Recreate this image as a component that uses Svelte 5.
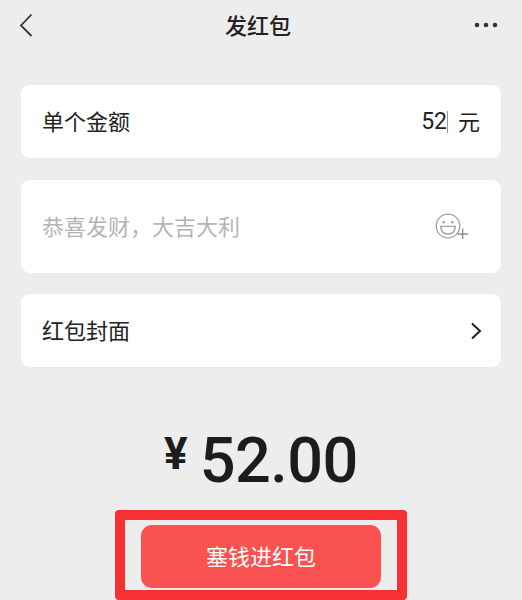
<script>
  const cardRadius = 9;
</script>

<div class="page" style="--r:{cardRadius}px">
  <header class="nav">
    <svg class="back" width="16" height="24" viewBox="0 0 16 24"><path d="M13.5 1.5 L3 12.5 L13.5 23" fill="none" stroke="#333" stroke-width="1.8"/></svg>
    <h1>发红包</h1>
    <svg class="more" width="24" height="6" viewBox="0 0 24 6"><circle cx="3" cy="3" r="2.3"/><circle cx="12" cy="3" r="2.3"/><circle cx="21" cy="3" r="2.3"/></svg>
  </header>

  <section class="cards">
    <div class="card row amount">
      <span class="label">单个金额</span>
      <span class="value"><span class="num">52</span><i class="caret"></i><span class="unit">元</span></span>
    </div>
    <div class="card row greeting">
      <span class="placeholder">恭喜发财，大吉大利</span>
      <svg width="34" height="28" viewBox="0 0 34 28" fill="none" stroke="#a0a0a0" stroke-width="1.3">
        <circle cx="13" cy="13" r="11.8"/>
        <circle cx="8.6" cy="9.2" r="1.3" fill="#a0a0a0" stroke="none"/>
        <circle cx="17.4" cy="9.2" r="1.3" fill="#a0a0a0" stroke="none"/>
        <path d="M5.6 13.4 H20.4 C20 18.4 17 21 13 21 C9 21 6 18.4 5.6 13.4 Z"/>
        <path d="M22.5 21 H33 M27.7 15.5 V26" stroke="#909090"/>
      </svg>
    </div>
    <div class="card row cover">
      <span class="label">红包封面</span>
      <svg width="12" height="18" viewBox="0 0 12 18"><path d="M2 1.5 L10 9 L2 16.5" fill="none" stroke="#222" stroke-width="2"/></svg>
    </div>
  </section>

  <div class="total"><span class="yen">¥</span><span class="sum">52.00</span></div>

  <div class="frame">
    <button type="button">塞钱进红包</button>
  </div>
</div>

<style>
  :global(body) {
    margin: 0;
    background: #ededed;
  }
  .page {
    height: 600px;
    overflow: hidden;
    display: flex;
    flex-direction: column;
    background: #ededed;
    color: #222;
    font-family: "Noto Sans CJK SC", "Liberation Sans", sans-serif;
  }
  .nav {
    height: 50px;
    display: flex;
    align-items: center;
    justify-content: space-between;
    padding: 0 24px 0 18px;
  }
  h1 {
    margin: 0 0 2px 8px;
    font-size: 22px;
    font-weight: 500;
    line-height: 48px;
    color: #222;
  }
  .more { fill: #333; }
  .cards {
    margin: 35px 21px 0;
    display: flex;
    flex-direction: column;
  }
  .card {
    background: #fff;
    border-radius: var(--r);
    padding: 0 21px;
    font-size: 22px;
  }
  .row {
    display: flex;
    align-items: center;
    justify-content: space-between;
  }
  .amount, .cover { height: 73px; }
  .greeting { height: 93px; margin: 22px 0 21px; }
  .cover { padding-right: 19px; }
  .label { margin-bottom: 3px; }
  .value {
    display: flex;
    align-items: center;
  }
  .num {
    font-family: "Roboto", "Liberation Sans", sans-serif;
    font-size: 23px;
  }
  .caret {
    width: 1px;
    height: 22px;
    background: #999;
    margin: 0 10px 0 0;
  }
  .unit { margin-top: -3px; }
  .placeholder { color: #b4b4b4; margin-bottom: 4px; }
  .greeting svg { margin-right: 11px; }
  .total {
    margin-top: 53px;
    height: 80px;
    display: flex;
    align-items: center;
    justify-content: center;
    gap: 12px;
    color: #1c1c1c;
    font-family: "Roboto", "Liberation Sans", sans-serif;
    font-weight: 500;
  }
  .yen {
    font-size: 44px;
    font-weight: 700;
    margin-bottom: 12px;
  }
  .sum {
    font-size: 63px;
    letter-spacing: -0.5px;
  }
  .frame {
    align-self: center;
    box-sizing: border-box;
    width: 292px;
    height: 90px;
    margin-top: 10px;
    flex: none;
    border: 10px solid #f63033;
    border-radius: 4px;
    display: flex;
    align-items: flex-start;
    justify-content: center;
    padding-top: 5px;
  }
  button {
    width: 240px;
    height: 63px;
    border: 0;
    border-radius: 11px;
    background: #fa5151;
    color: #fff;
    font: inherit;
    font-size: 22px;
    font-weight: 400;
    padding: 0 0 3px;
  }
</style>
